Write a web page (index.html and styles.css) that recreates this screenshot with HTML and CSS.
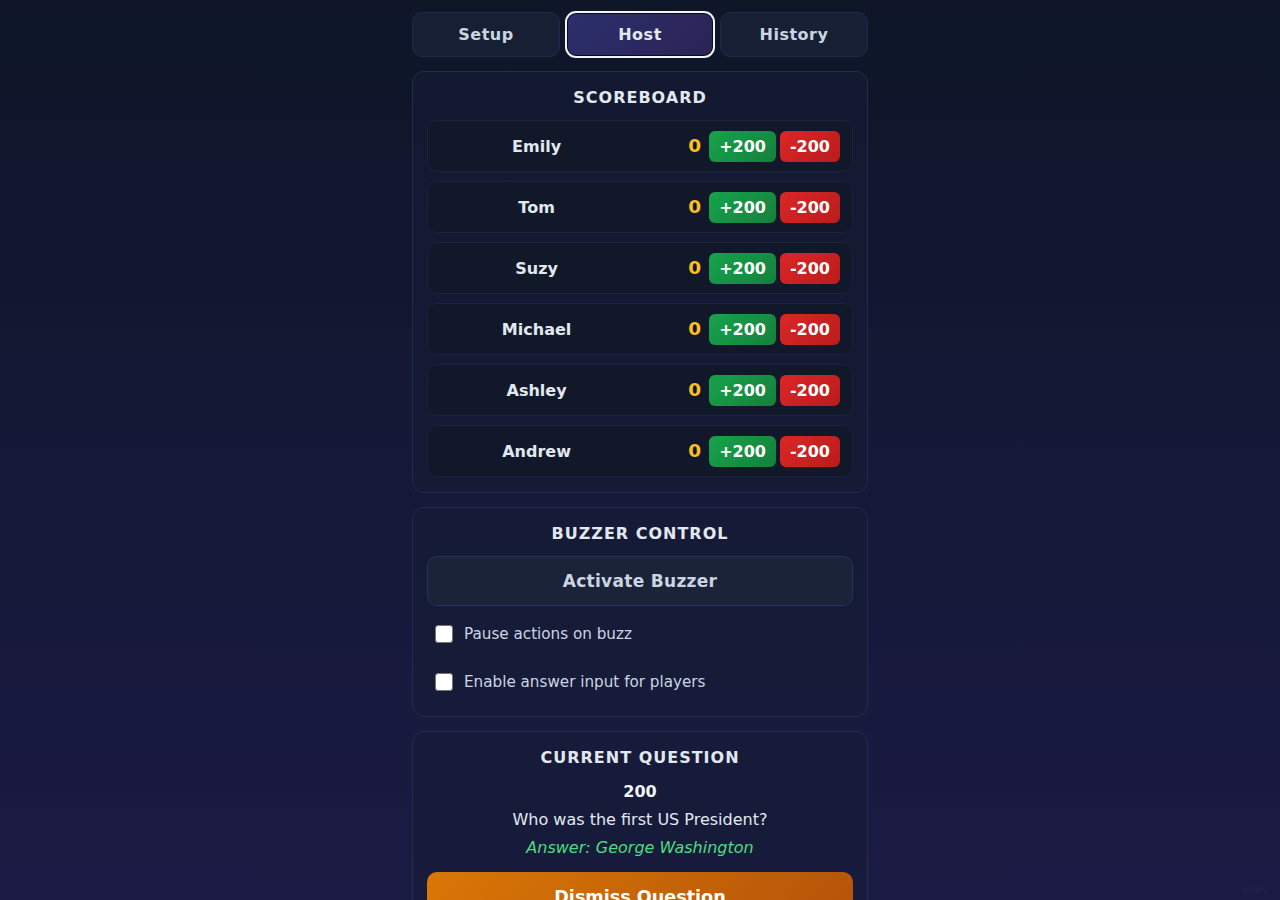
FILE: index.html
```html
<!DOCTYPE html>
<html lang="en">
<head>
<meta charset="utf-8">
<title>Host</title>
<link rel="stylesheet" href="styles.css">
</head>
<body>
<div class="app">
  <nav class="tabs">
    <button class="tab">Setup</button>
    <button class="tab active">Host</button>
    <button class="tab">History</button>
  </nav>

  <section class="card">
    <h2 class="card-title">SCOREBOARD</h2>
    <div class="rows">
      <div class="row"><span class="name">Emily</span><span class="score">0</span><button class="btn plus">+200</button><button class="btn minus">-200</button></div>
      <div class="row"><span class="name">Tom</span><span class="score">0</span><button class="btn plus">+200</button><button class="btn minus">-200</button></div>
      <div class="row"><span class="name">Suzy</span><span class="score">0</span><button class="btn plus">+200</button><button class="btn minus">-200</button></div>
      <div class="row"><span class="name">Michael</span><span class="score">0</span><button class="btn plus">+200</button><button class="btn minus">-200</button></div>
      <div class="row"><span class="name">Ashley</span><span class="score">0</span><button class="btn plus">+200</button><button class="btn minus">-200</button></div>
      <div class="row"><span class="name">Andrew</span><span class="score">0</span><button class="btn plus">+200</button><button class="btn minus">-200</button></div>
    </div>
  </section>

  <section class="card">
    <h2 class="card-title">BUZZER CONTROL</h2>
    <button class="activate">Activate Buzzer</button>
    <label class="check first"><span class="box"></span><span>Pause actions on buzz</span></label>
    <label class="check"><span class="box"></span><span>Enable answer input for players</span></label>
  </section>

  <section class="card">
    <h2 class="card-title">CURRENT QUESTION</h2>
    <div class="q-value">200</div>
    <div class="q-text">Who was the first US President?</div>
    <div class="q-answer">Answer: George Washington</div>
    <button class="dismiss">Dismiss Question</button>
  </section>
</div>
<div class="watermark">vdev</div>
</body>
</html>
```

FILE: styles.css
```css
* { box-sizing: border-box; }
html, body { height: 100%; }
body {
  margin: 0;
  background: linear-gradient(180deg, #0e1628 0%, #1b1a44 100%);
  font-family: "DejaVu Sans", sans-serif;
  color: #e2e8f0;
  overflow: hidden;
}
.app {
  width: 456px;
  margin: 0 auto;
  padding-top: 12px;
  display: flex;
  flex-direction: column;
  gap: 14px;
}
.tabs {
  display: grid;
  grid-template-columns: repeat(3, 1fr);
  gap: 6px;
}
.tab {
  height: 45px;
  border-radius: 10px;
  border: 1px solid #1f2a4a;
  background: #161f33;
  color: #cbd5e1;
  font-family: inherit;
  font-weight: bold;
  font-size: 16px;
  letter-spacing: 0.5px;
}
.tab.active {
  background: linear-gradient(135deg, #2b2f6c 0%, #2c2356 100%);
  border: 2px solid #0a0d18;
  outline: 2px solid #f1f5f9;
  outline-offset: -1px;
  color: #e2e8f0;
}
.card {
  border: 1px solid #222c4e;
  border-radius: 12px;
  background: rgba(22, 30, 52, 0.55);
  padding: 16px 14px 15px;
}
.card-title {
  margin: 0 0 12px;
  text-align: center;
  font-size: 16px;
  line-height: 20px;
  font-weight: bold;
  letter-spacing: 1px;
  color: #e2e8f0;
}
.rows {
  display: flex;
  flex-direction: column;
  gap: 9px;
}
.row {
  height: 52px;
  display: flex;
  align-items: center;
  gap: 4px;
  padding: 0 12px;
  border: 1px solid #1a2240;
  border-radius: 10px;
  background: #111829;
}
.name {
  flex: 1;
  text-align: center;
  font-weight: bold;
  font-size: 16px;
  color: #e2e8f0;
}
.score {
  min-width: 64px;
  text-align: right;
  margin-right: 4px;
  font-weight: bold;
  font-size: 18.5px;
  color: #fbbf24;
  position: relative;
  top: -1px;
}
.btn {
  border: 0;
  border-radius: 6px;
  padding: 6px 10px;
  font-family: inherit;
  font-weight: bold;
  font-size: 16px;
  line-height: 19px;
  color: #ffffff;
}
.plus { background: linear-gradient(135deg, #16a34a 0%, #15803d 100%); }
.minus { background: linear-gradient(135deg, #dc2626 0%, #b91c1c 100%); }
.activate {
  display: block;
  width: 100%;
  height: 50px;
  border: 1px solid #27315a;
  border-radius: 10px;
  background: #1b2339;
  color: #cbd5e1;
  font-family: inherit;
  font-weight: bold;
  font-size: 17px;
  letter-spacing: 0.3px;
}
.check {
  display: flex;
  align-items: center;
  gap: 11px;
  height: 38px;
  padding: 0 8px;
  margin-top: 10px;
  font-size: 15.2px;
  color: #cbd5e1;
}
.check.first { margin-top: 9px; }
.box {
  width: 18px;
  height: 18px;
  border-radius: 3px;
  background: #ffffff;
  border: 1px solid #767676;
  flex: none;
}
.q-value {
  margin-top: 14px;
  text-align: center;
  font-weight: bold;
  font-size: 16px;
  line-height: 20px;
  color: #f1f5f9;
}
.q-text {
  margin-top: 8px;
  text-align: center;
  font-size: 16px;
  line-height: 20px;
  color: #e2e8f0;
}
.q-answer {
  margin-top: 8px;
  text-align: center;
  font-size: 16px;
  line-height: 20px;
  font-style: italic;
  color: #4ade80;
}
.dismiss {
  display: block;
  width: 100%;
  height: 50px;
  margin-top: 14px;
  border: 0;
  border-radius: 10px;
  background: linear-gradient(135deg, #d97706 0%, #b45309 100%);
  color: #ffffff;
  font-family: inherit;
  font-weight: bold;
  font-size: 17.6px;
}
.watermark {
  position: fixed;
  right: 12px;
  bottom: 4px;
  font-size: 11px;
  color: #25234f;
}
```
